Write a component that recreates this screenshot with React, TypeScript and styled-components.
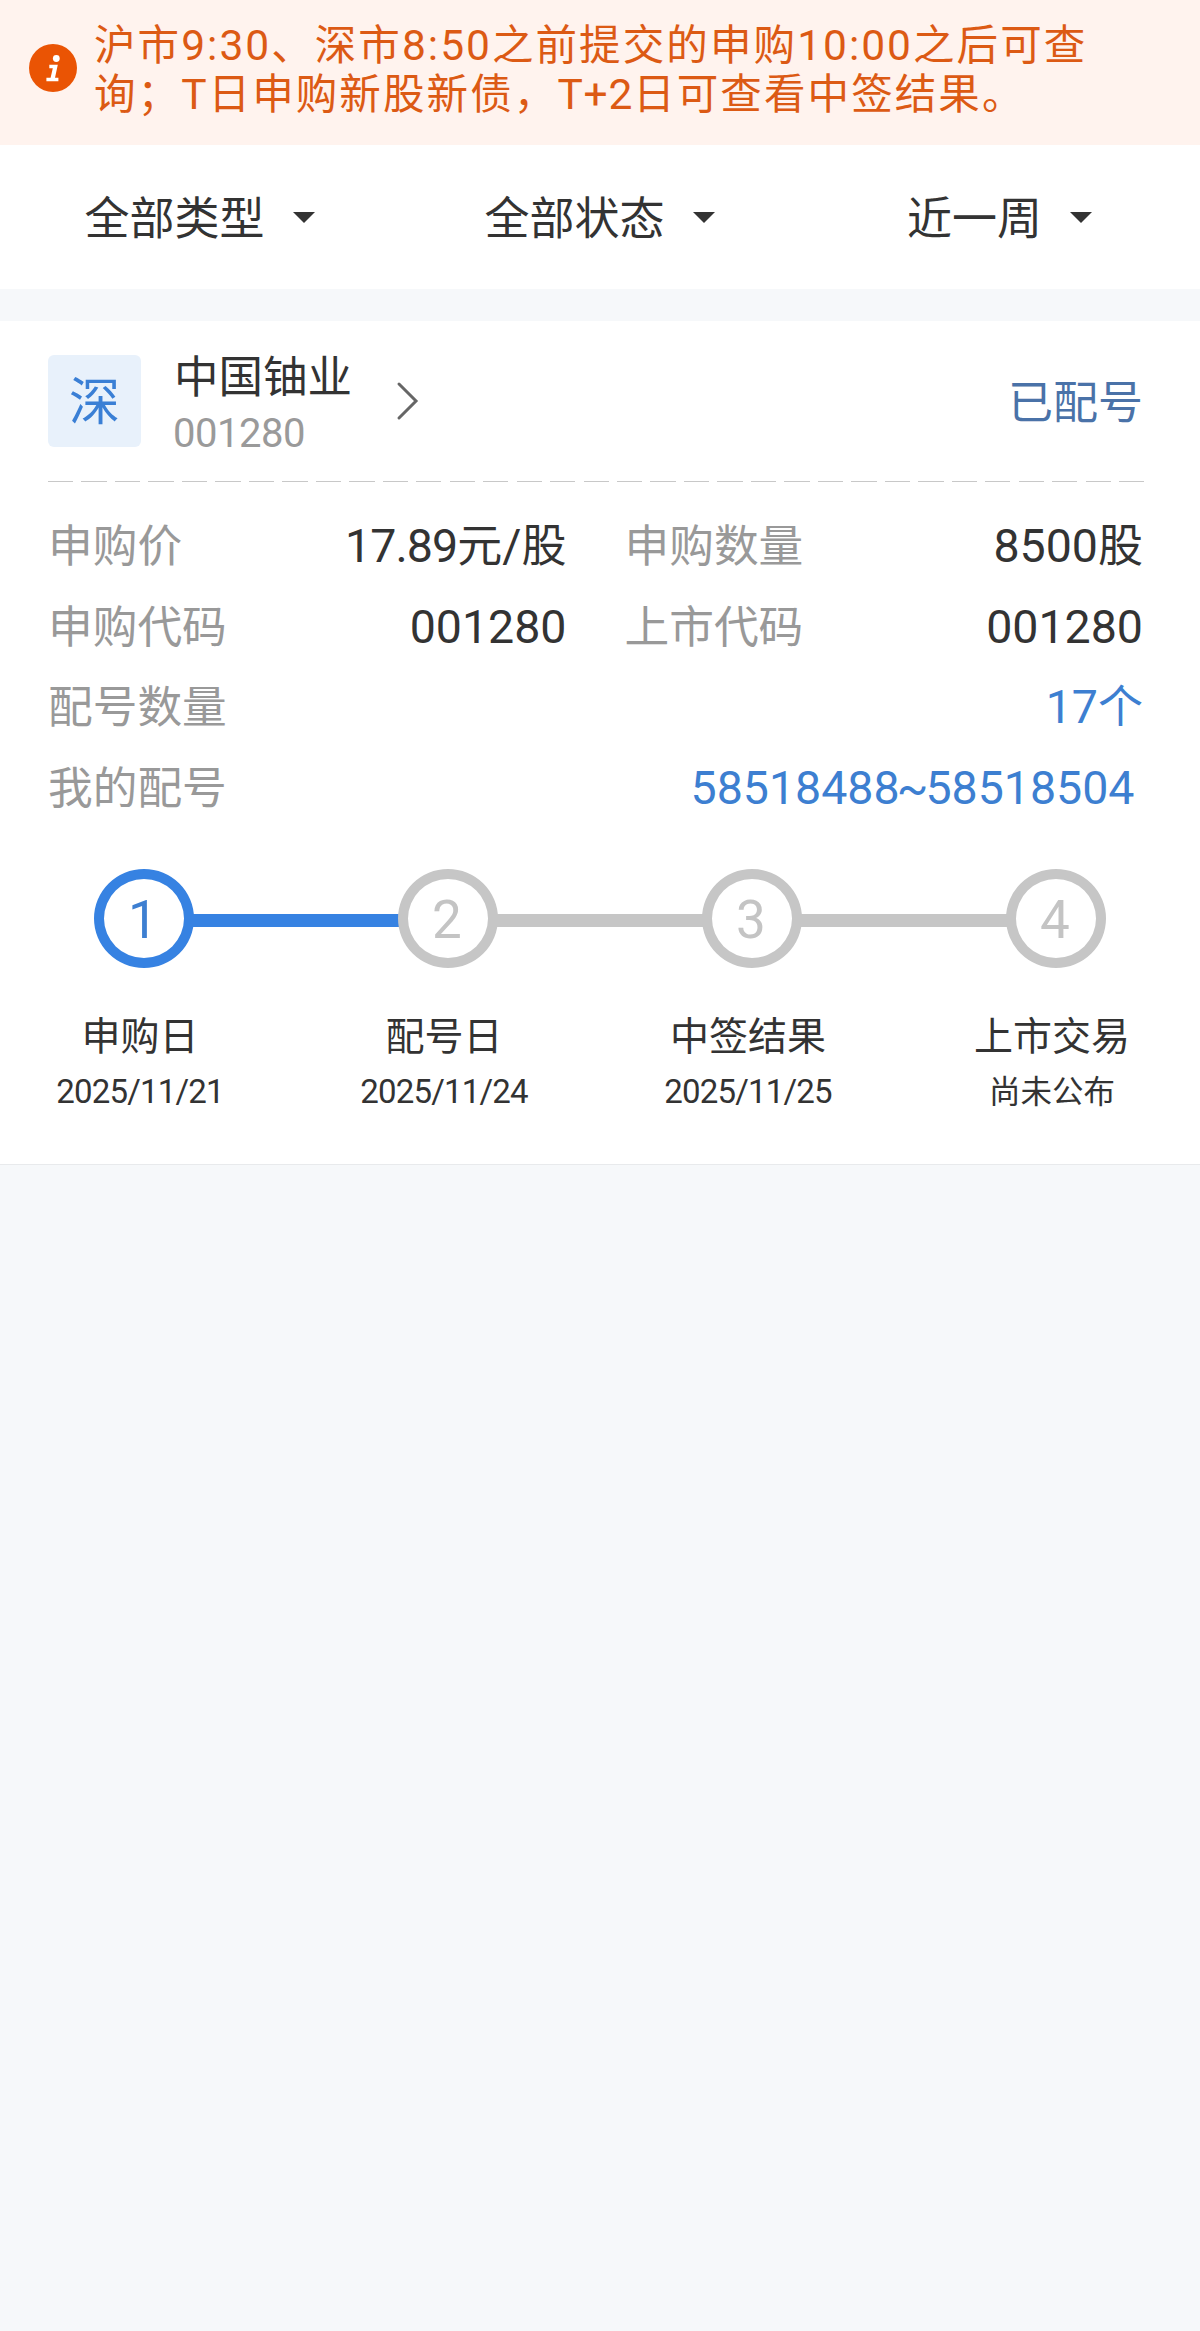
import React from "react";
import styled, { createGlobalStyle } from "styled-components";

const GlobalStyle = createGlobalStyle`
  * { box-sizing: border-box; }
  html, body { margin: 0; background: #f6f8fa; }
  body {
    font-family: "Noto Sans CJK SC", sans-serif;
    color: #333;
    font-size: 45px;
  }
`;

const Page = styled.div`
  width: 1200px;
  min-height: 2331px;
  background: #f6f8fa;
`;

const Num = styled.span<{ $size: number; $gap?: number }>`
  font-family: Roboto, "Noto Sans CJK SC", sans-serif;
  font-size: ${(p) => p.$size}px;
  letter-spacing: ${(p) => p.$gap ?? 0}px;
  line-height: 0;
`;

const Notice = styled.div`
  height: 145px;
  display: flex;
  align-items: flex-start;
  padding: 21px 29px 0;
  background: #fff3ee;
`;

const InfoIcon = styled.svg`
  flex: none;
  width: 48px;
  height: 48px;
  margin-top: 23px;
`;

const NoticeText = styled.p`
  margin: 0 0 0 17px;
  font-family: Roboto, "Noto Sans CJK SC", sans-serif;
  font-size: 41.5px;
  line-height: 49px;
  letter-spacing: 2.1px;
  white-space: nowrap;
  color: #dc5a14;
`;

const Filters = styled.div`
  display: grid;
  grid-template-columns: repeat(3, 1fr);
  height: 144px;
  padding-bottom: 2px;
  background: #fff;
`;

const Filter = styled.div`
  display: flex;
  align-items: center;
  justify-content: center;
  gap: 28px;
  padding-right: 1px;
  line-height: 60px;
`;

const Caret = styled.span`
  margin-top: 2px;
  border: 11px solid transparent;
  border-top-color: #333;
  border-bottom-width: 0;
`;

const Card = styled.section`
  margin-top: 32px;
  height: 844px;
  padding: 34px 56px 0 48px;
  background: #fff;
  border-bottom: 1px solid #e8eaec;
`;

const Head = styled.header`
  display: flex;
  align-items: center;
  height: 92px;
`;

const Market = styled.div`
  width: 93px;
  height: 92px;
  border-radius: 6px;
  background: #e8f1fb;
  color: #3a7fd5;
  font-size: 51px;
  line-height: 87px;
  text-align: center;
`;

const Stock = styled.div`
  display: flex;
  flex-direction: column;
  gap: 3px;
  margin: 0 0 1px 32px;
`;

const StockName = styled.div`
  padding-left: 1px;
  font-size: 44.5px;
  line-height: 52px;
`;

const StockCode = styled.div`
  line-height: 50px;
  color: #9a9a9a;
`;

const Chevron = styled.svg`
  width: 24px;
  height: 40px;
  margin-left: 44px;
`;

const Status = styled.div`
  margin: 0 1px 3px auto;
  line-height: 60px;
  color: #4a72a8;
`;

const Dashes = styled.div`
  height: 1px;
  margin-top: 34px;
  background: repeating-linear-gradient(
    to right,
    #c8c8c8 0 25.3px,
    transparent 25.3px 33.47px
  );
`;

const Details = styled.div`
  display: grid;
  grid-template-columns: 1fr 1fr;
  grid-auto-rows: 80.7px;
  column-gap: 58px;
  margin: 20.5px 1px 0 0;
`;

const Detail = styled.div<{ $wide?: boolean }>`
  grid-column: ${(p) => (p.$wide ? "1 / -1" : "auto")};
  display: flex;
  align-items: center;
  justify-content: space-between;
  line-height: 60px;
`;

const Label = styled.span`
  font-size: 44.7px;
  color: #999;
`;

const Value = styled.span<{ $link?: boolean; $inset?: number }>`
  color: ${(p) => (p.$link ? "#3d7fd1" : "#333")};
  padding-right: ${(p) => p.$inset ?? 0}px;
`;

const Track = styled.div`
  display: flex;
  align-items: center;
  margin-top: 44.2px;
  padding: 0 38px 0 46px;
`;

const Dot = styled.div<{ $active?: boolean }>`
  flex: none;
  width: 100px;
  height: 99px;
  display: flex;
  align-items: center;
  justify-content: center;
  padding-right: 2px;
  border: 10px solid ${(p) => (p.$active ? "#3682e2" : "#c6c6c6")};
  border-radius: 50%;
  color: ${(p) => (p.$active ? "#3d7fd1" : "#c4c4c4")};
`;

const DotLabel = styled.div`
  line-height: 60px;
`;

const Bar = styled.div<{ $active?: boolean }>`
  flex: 1;
  height: 13px;
  margin: 3px -2px 0;
  background: ${(p) => (p.$active ? "#3682e2" : "#c6c6c6")};
`;

const Steps = styled.div`
  display: flex;
  justify-content: space-between;
  margin-top: 37px;
`;

const Step = styled.div`
  width: 184px;
  text-align: center;
  white-space: nowrap;
`;

const StepName = styled.div`
  font-size: 39px;
  line-height: 56px;
`;

const StepDate = styled.div`
  font-size: 31.5px;
  line-height: 56px;
`;

const filters = ["全部类型", "全部状态", "近一周"];

const steps = [
  { name: "申购日", date: "2025/11/21" },
  { name: "配号日", date: "2025/11/24" },
  { name: "中签结果", date: "2025/11/25" },
  { name: "上市交易", note: "尚未公布" },
];

type FigureProps = { children: React.ReactNode; gap?: number };

const V = ({ children, gap = 0 }: FigureProps) => (
  <Num $size={46.5} $gap={gap}>{children}</Num>
);
const N = ({ children, gap = 2 }: FigureProps) => (
  <Num $size={42.5} $gap={gap}>{children}</Num>
);

export default function App() {
  return (
    <>
      <GlobalStyle />
      <Page>
        <Notice>
          <InfoIcon viewBox="0 0 48 48">
            <circle cx="24" cy="24" r="24" fill="#ea5404" />
            <circle cx="27.3" cy="14.5" r="3.4" fill="#fff" />
            <path
              d="M20.3 20.8H28.8L26 33.8H29.4V37.2H17.4V33.8H21.6L23.8 24.2H20.3Z"
              fill="#fff"
            />
          </InfoIcon>
          <NoticeText>
            沪市<N>9:30</N>、深市<N>8:50</N>之前提交的申购<N>10:00</N>之后可查
            <br />
            询；<N>T</N>日申购新股新债，<N gap={0.8}>T+2</N>日可查看中签结果。
          </NoticeText>
        </Notice>

        <Filters>
          {filters.map((f) => (
            <Filter key={f}>
              {f}
              <Caret />
            </Filter>
          ))}
        </Filters>

        <Card>
          <Head>
            <Market>深</Market>
            <Stock>
              <StockName>中国铀业</StockName>
              <StockCode>
                <Num $size={40} $gap={-0.5}>001280</Num>
              </StockCode>
            </Stock>
            <Chevron viewBox="0 0 24 40">
              <path
                d="M3 3L20 20L3 37"
                fill="none"
                stroke="#666"
                strokeWidth="3"
                strokeLinecap="round"
              />
            </Chevron>
            <Status>已配号</Status>
          </Head>

          <Dashes />

          <Details>
            <Detail>
              <Label>申购价</Label>
              <Value><V gap={-0.9}>17.89</V>元<V>/</V>股</Value>
            </Detail>
            <Detail>
              <Label>申购数量</Label>
              <Value><V>8500</V>股</Value>
            </Detail>
            <Detail>
              <Label>申购代码</Label>
              <Value><V>001280</V></Value>
            </Detail>
            <Detail>
              <Label>上市代码</Label>
              <Value><V>001280</V></Value>
            </Detail>
            <Detail $wide>
              <Label>配号数量</Label>
              <Value $link><V>17</V>个</Value>
            </Detail>
            <Detail $wide>
              <Label>我的配号</Label>
              <Value $link $inset={8.5}>
                <V>5851848</V><V gap={-2.9}>8~</V><V>58518504</V>
              </Value>
            </Detail>
          </Details>

          <Track>
            {steps.map((s, i) => (
              <React.Fragment key={s.name}>
                {i > 0 && <Bar $active={i === 1} />}
                <Dot $active={i === 0}>
                  <DotLabel>
                    <Num $size={53}>{i + 1}</Num>
                  </DotLabel>
                </Dot>
              </React.Fragment>
            ))}
          </Track>

          <Steps>
            {steps.map((s) => (
              <Step key={s.name}>
                <StepName>{s.name}</StepName>
                <StepDate>
                  {s.date ? <Num $size={33} $gap={-0.8}>{s.date}</Num> : s.note}
                </StepDate>
              </Step>
            ))}
          </Steps>
        </Card>
      </Page>
    </>
  );
}
